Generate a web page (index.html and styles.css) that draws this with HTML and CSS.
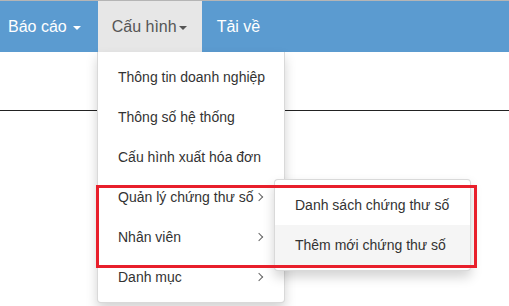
FILE: index.html
```html
<!DOCTYPE html>
<html lang="vi">
<head>
  <meta charset="UTF-8" />
  <title>Cấu hình</title>
  <link rel="stylesheet" href="styles.css">
</head>
<body>
  <header class="header">
    <nav class="navbar">
      <a class="nav-link first" href="#">Báo cáo <span class="caret"></span></a>
      <a class="nav-link open" href="#">Cấu hình<span class="caret"></span></a>
      <a class="nav-link" href="#">Tải về</a>
    </nav>

    <div class="dropdown-menu">
      <a class="menu-item" href="#">Thông tin doanh nghiệp</a>
      <a class="menu-item" href="#">Thông số hệ thống</a>
      <a class="menu-item" href="#">Cấu hình xuất hóa đơn</a>
      <a class="menu-item" href="#">Quản lý chứng thư số <span class="chevron"></span></a>
      <a class="menu-item" href="#">Nhân viên <span class="chevron"></span></a>
      <a class="menu-item" href="#">Danh mục <span class="chevron"></span></a>
    </div>

    <div class="dropdown-menu sub">
      <a class="menu-item" href="#">Danh sách chứng thư số</a>
      <a class="menu-item hover" href="#">Thêm mới chứng thư số</a>
    </div>
  </header>

  <main class="content">
    <div class="rule"></div>
  </main>

  <div class="highlight"></div>
</body>
</html>
```

FILE: styles.css
```css
html {
  height: 100%;
}

body {
  margin: 0;
  min-height: 305px;
  background: #fff;
  font-family: "Liberation Sans", Arial, sans-serif;
  font-size: 14px;
  color: #333;
  border-top: 1px solid #b5b5b5;
}

a {
  text-decoration: none;
  color: inherit;
}

.header {
  position: relative;
}

.navbar {
  display: flex;
  height: 51px;
  background-color: #5b9bd0;
}

.nav-link {
  display: flex;
  align-items: center;
  gap: 4px;
  height: 51px;
  padding: 0 15px;
  font-size: 16px;
  color: #fff;
}

.nav-link.first {
  padding-left: 8px;
  padding-right: 17px;
}

.nav-link.open {
  gap: 0;
  padding-left: 14px;
  background-color: #e7e7e7;
  color: #555;
}

.caret {
  display: inline-block;
  width: 0;
  height: 0;
  margin-left: 2px;
  margin-top: 2px;
  border-top: 4px solid;
  border-left: 4px solid transparent;
  border-right: 4px solid transparent;
}

.dropdown-menu {
  position: absolute;
  z-index: 10;
  top: 51px;
  left: 97px;
  width: 186px;
  padding: 5px 0;
  display: flex;
  flex-direction: column;
  background: #fff;
  border: 1px solid rgba(0, 0, 0, 0.15);
  border-top: none;
  border-radius: 0 0 4px 4px;
  box-shadow: 0 6px 12px rgba(0, 0, 0, 0.175);
}

.menu-item {
  display: flex;
  align-items: center;
  justify-content: space-between;
  height: 40px;
  padding: 0 22px 0 20px;
  font-size: 14px;
  color: #333;
  white-space: nowrap;
}

.menu-item.hover {
  background-color: #f5f5f5;
}

.chevron {
  flex-shrink: 0;
  display: inline-block;
  width: 5px;
  height: 5px;
  border-top: 1px solid #666;
  border-right: 1px solid #666;
  transform: rotate(45deg);
}

.dropdown-menu.sub {
  z-index: 11;
  top: 178px;
  left: 274px;
  width: 195px;
  border-top: 1px solid rgba(0, 0, 0, 0.15);
  border-radius: 4px;
}

.content {
  padding-top: 58px;
}

.rule {
  height: 1px;
  background: #222;
}

.highlight {
  position: absolute;
  left: 96px;
  top: 185px;
  width: 375px;
  height: 77px;
  border: 3px solid #e81f2b;
  z-index: 20;
}
```
